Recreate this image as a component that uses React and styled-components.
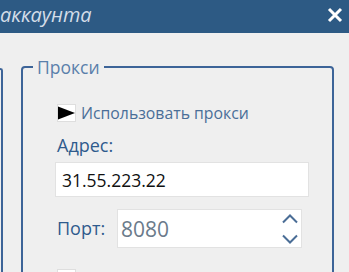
import React from 'react';
import styled, { createGlobalStyle } from 'styled-components';

const GlobalStyle = createGlobalStyle`
  html, body {
    margin: 0;
    padding: 0;
    background: #efefef;
    font-family: "Open Sans", "Noto Sans", sans-serif;
    overflow: hidden;
  }
`;

const Window = styled.div`
  width: 349px;
  height: 272px;
  background: #efefef;
  overflow: hidden;
`;

const TitleBar = styled.div`
  height: 33px;
  background: #2d5a84;
  display: flex;
  align-items: center;
  justify-content: space-between;
  padding: 0 6px 0 0;
  box-sizing: border-box;
`;

const Title = styled.span`
  font-style: italic;
  font-size: 20px;
  color: #d3dde8;
  line-height: 26px;
  margin-top: -3px;
`;

const CloseButton = styled.button`
  border: 0;
  background: none;
  padding: 0;
  width: 16px;
  height: 16px;
  display: flex;
  margin-top: -4px;
`;

const Body = styled.div`
  display: flex;
  align-items: flex-start;
`;

const LeftStub = styled.div`
  width: 1px;
  height: 300px;
  margin-top: 35px;
  border-top: 2px solid #3d6498;
  border-right: 2px solid #3d6498;
  border-top-right-radius: 4px;
`;

const GroupBox = styled.fieldset`
  box-sizing: border-box;
  width: 313px;
  height: 260px;
  margin: 24px 0 0 18px;
  padding: 0 0 0 32px;
  border: 2px solid #3d6498;
  border-radius: 4px;
`;

const Legend = styled.legend`
  margin-left: -22px;
  padding: 0 4px;
  font-size: 17.5px;
  line-height: 20px;
  color: #5a80ab;
`;

const CheckRow = styled.label`
  display: flex;
  align-items: center;
  gap: 5px;
  margin-top: ${p => p.$top}px;
  padding-left: 2px;
  font-size: 15.8px;
  color: #4a6e98;
`;

const CheckBox = styled.span`
  box-sizing: border-box;
  width: 19px;
  height: 18px;
  background: #fff;
  border: 1px solid #dedede;
  display: flex;
  align-items: center;
`;

const FieldLabel = styled.div`
  font-size: 18px;
  line-height: 22px;
  color: #2f5b8d;
  padding-left: 2px;
  margin-top: 10px;
`;

const TextInput = styled.div`
  box-sizing: border-box;
  width: ${p => p.$width}px;
  height: ${p => p.$height}px;
  background: #fff;
  border: 1px solid #e2e2e2;
  display: flex;
  align-items: center;
  justify-content: space-between;
  padding: 0 4px 0 ${p => p.$pad}px;
  font-size: ${p => p.$size}px;
  color: ${p => p.$color};
`;

const PortRow = styled.div`
  display: flex;
  align-items: center;
  margin-top: 12px;
`;

const PortLabel = styled(FieldLabel)`
  margin: -2px 0 0;
  width: 60px;
`;

const Spinner = styled.div`
  display: flex;
  flex-direction: column;
  gap: 10px;
  margin-right: -1px;
`;

const Arrow = ({ down }) => (
  <svg width="16" height="10" viewBox="0 0 16 10">
    <polyline
      points={down ? '1,1.5 8,8.5 15,1.5' : '1,8.5 8,1.5 15,8.5'}
      fill="none"
      stroke="#4a6d96"
      strokeWidth="2"
    />
  </svg>
);

const App = () => (
  <Window>
    <GlobalStyle />
    <TitleBar>
      <Title>аккаунта</Title>
      <CloseButton aria-label="Закрыть">
        <svg width="16" height="16" viewBox="0 0 16 16">
          <path d="M2 2 L14 14 M14 2 L2 14" stroke="#fff" strokeWidth="3" />
        </svg>
      </CloseButton>
    </TitleBar>
    <Body>
      <LeftStub />
      <GroupBox>
        <Legend>Прокси</Legend>
        <CheckRow $top={25}>
          <CheckBox>
            <svg width="18" height="14" viewBox="0 0 18 14">
              <polygon points="0,0 18,7 0,14" fill="#000" />
            </svg>
          </CheckBox>
          Использовать прокси
        </CheckRow>
        <FieldLabel>Адрес:</FieldLabel>
        <TextInput $width={254} $height={35} $pad={6} $size={17.5} $color="#111" style={{ marginTop: 6 }}>
          31.55.223.22
        </TextInput>
        <PortRow>
          <PortLabel>Порт:</PortLabel>
          <TextInput $width={185} $height={39} $pad={3} $size={21} $color="#6b7b8b">
            8080
            <Spinner>
              <Arrow />
              <Arrow down />
            </Spinner>
          </TextInput>
        </PortRow>
        <CheckRow $top={19}>
          <CheckBox />
          Авторизация
        </CheckRow>
      </GroupBox>
    </Body>
  </Window>
);

export default App;
